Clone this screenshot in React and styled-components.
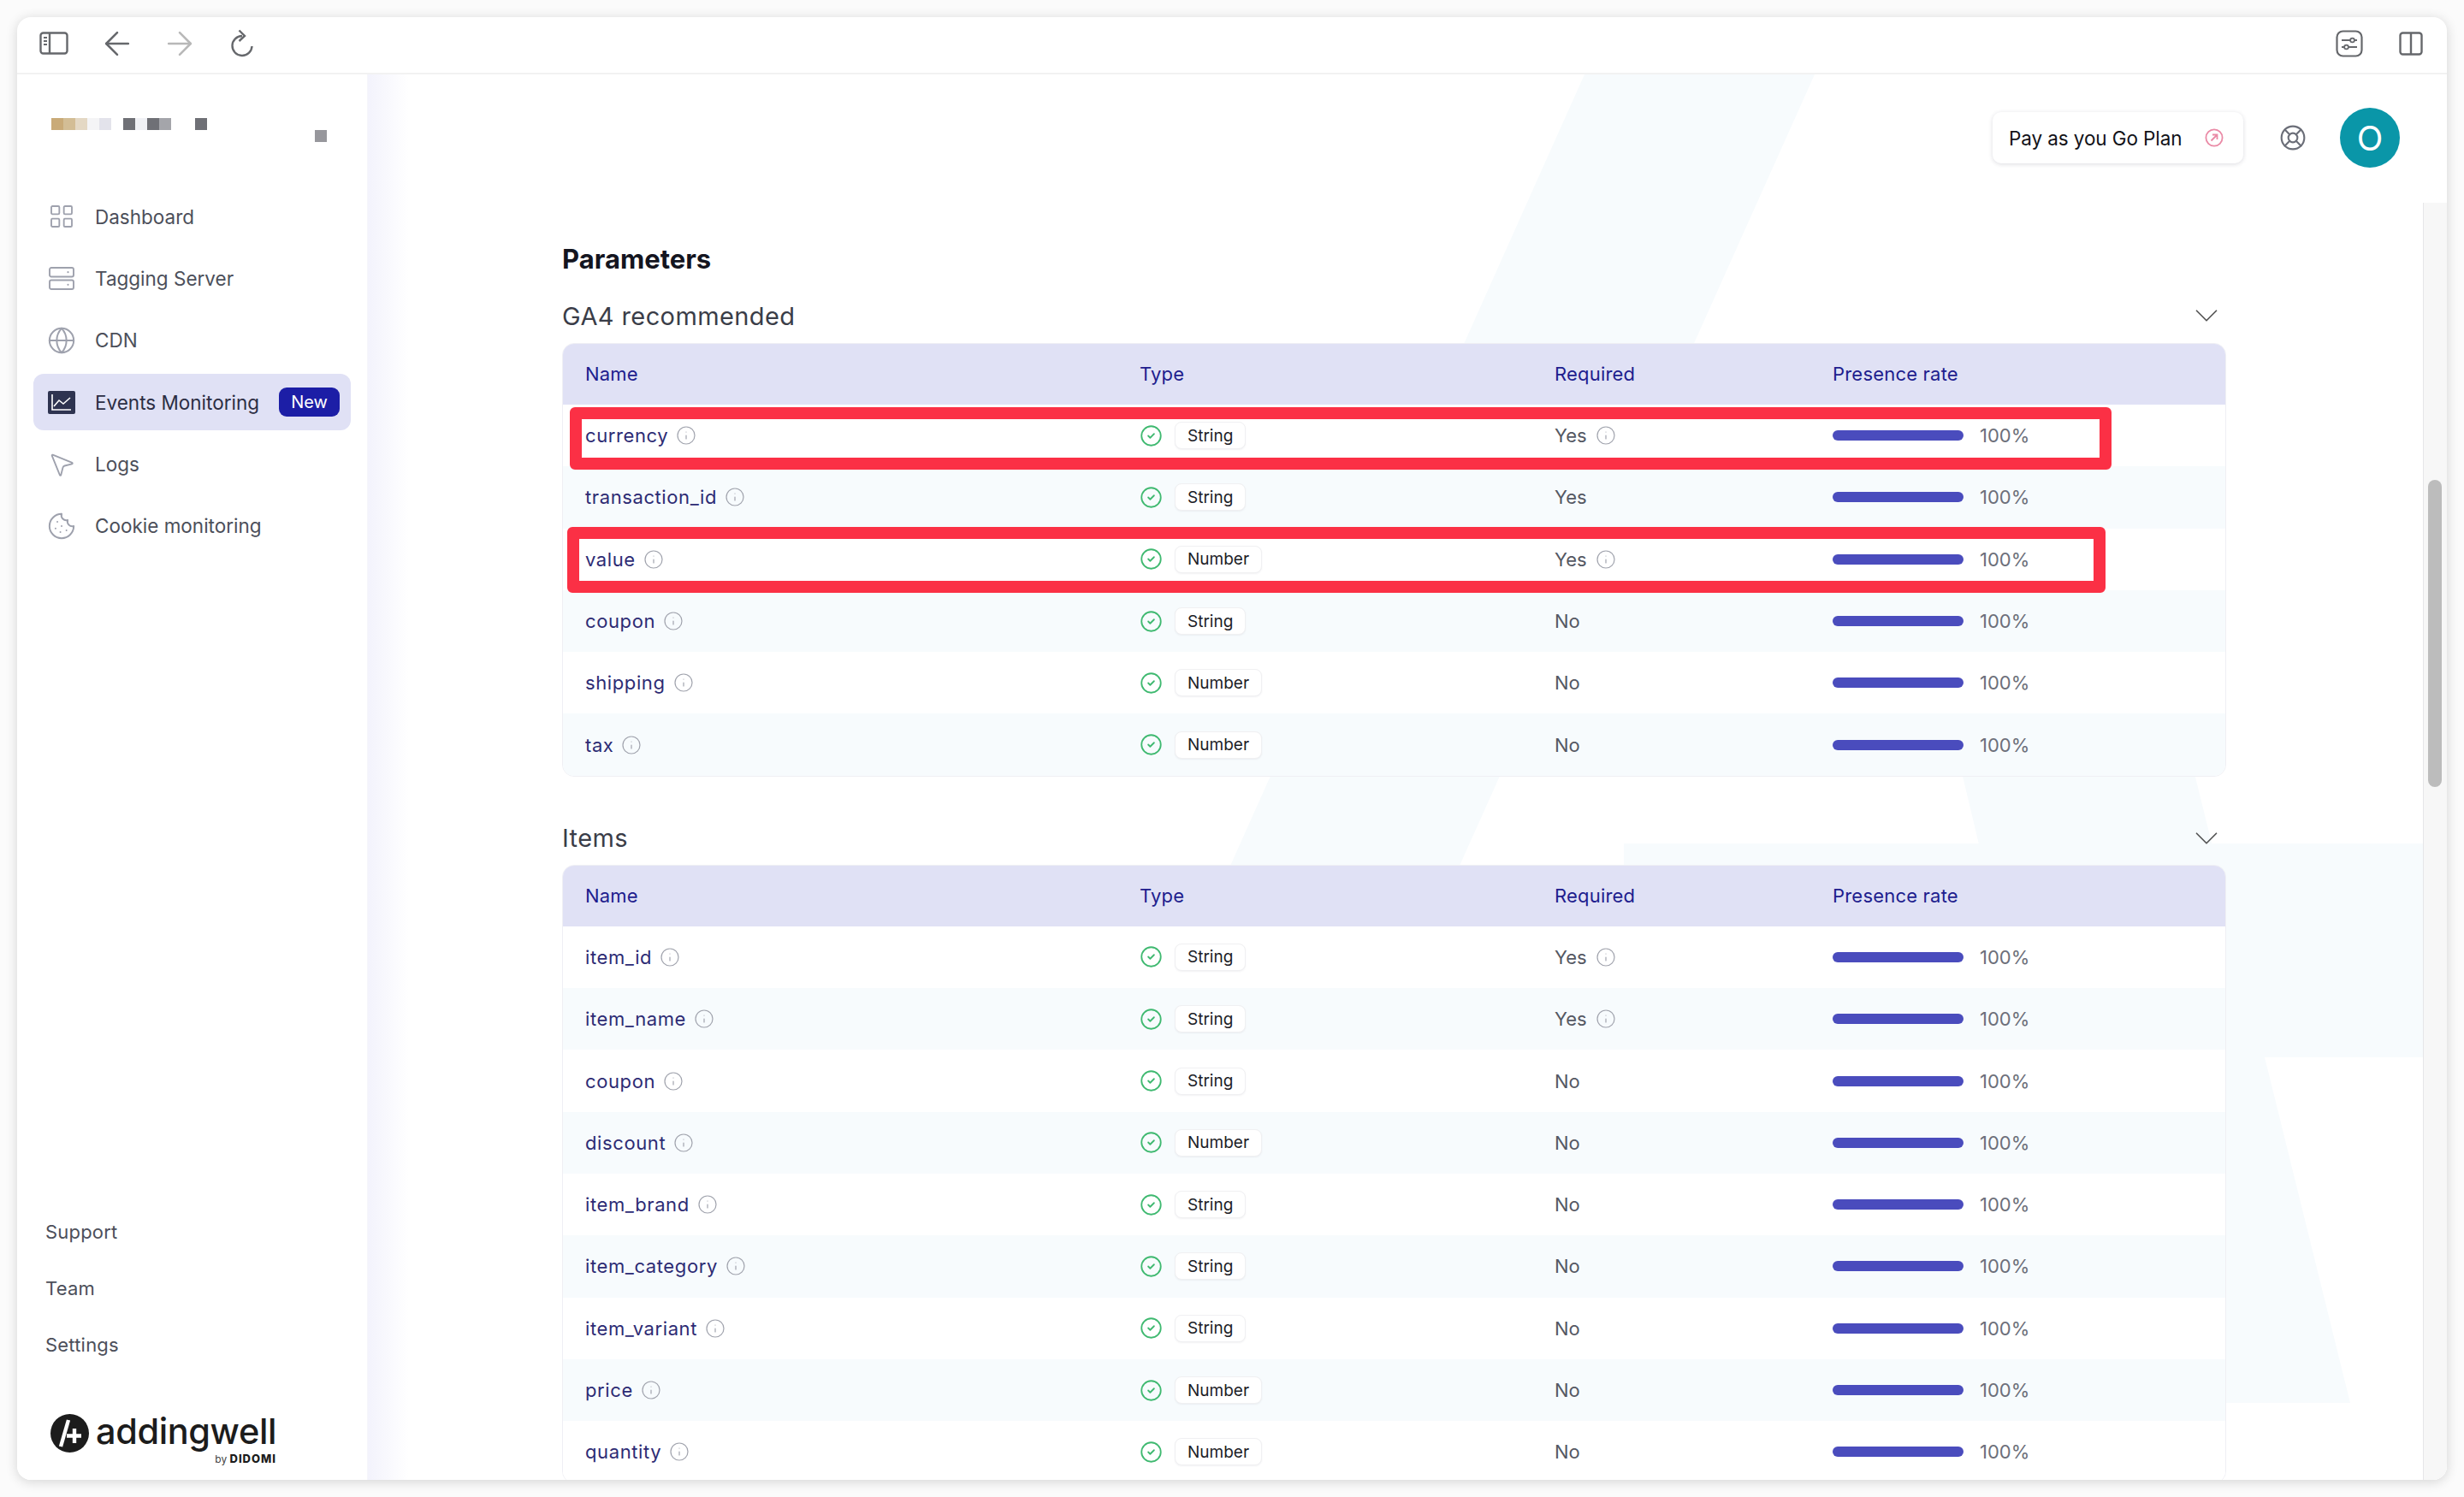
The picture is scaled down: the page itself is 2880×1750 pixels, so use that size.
import React from 'react';
import styled, { createGlobalStyle } from 'styled-components';
import {
  ArrowLeft,
  ArrowRight,
  LayoutGrid,
  Globe,
  MousePointer2,
  Cookie,
  LifeBuoy,
  ChevronDown,
  Info,
  CircleCheck,
} from 'lucide-react';

const GlobalStyle = createGlobalStyle`
  * { box-sizing: border-box; }
  html, body { margin: 0; padding: 0; background: #fbfbfb; }
  body { font-family: Inter, "Noto Sans", sans-serif; }
`;

const Page = styled.div`
  width: 2880px;
  height: 1750px;
  padding: 20px;
  overflow: hidden;
`;

const Window = styled.div`
  width: 2840px;
  height: 1710px;
  display: flex;
  flex-direction: column;
  background: #fff;
  border-radius: 16px;
  overflow: hidden;
  box-shadow: 0 2px 14px rgba(0, 0, 0, 0.16);
`;

const Toolbar = styled.div`
  height: 67px;
  flex: none;
  display: flex;
  align-items: center;
  padding: 0 28px 4px 26px;
  border-bottom: 2px solid #f2f2f2;
  color: #66686c;
`;

const ToolGroup = styled.div`
  display: flex;
  align-items: center;
  gap: ${(p) => p.$gap}px;
  margin-left: ${(p) => p.$left || 0}px;
`;

const ReloadSvg = styled.svg`
  margin-left: 6px;
`;

const Spacer = styled.div`
  flex: 1;
`;

const Body = styled.div`
  flex: 1;
  min-height: 0;
  display: flex;
`;

const Sidebar = styled.aside`
  width: 410px;
  flex: none;
  display: flex;
  flex-direction: column;
  padding: 51px 0 16px 19px;
  background: #fff;
  border-right: 1px solid #f6f6fb;
`;

const Brand = styled.div`
  height: 82px;
  padding-left: 21px;
`;

const PixelRow = styled.div`
  display: flex;
  margin-left: ${(p) => p.$offset || 0}px;
`;

const Pixel = styled.span`
  width: 14px;
  height: 14px;
  background: ${(p) => p.$color || 'transparent'};
`;

const Nav = styled.nav`
  display: flex;
  flex-direction: column;
  gap: 6.4px;
`;

const NavItem = styled.div`
  width: 371px;
  height: 66px;
  display: flex;
  align-items: center;
  gap: 22px;
  padding: 0 13px 0 16px;
  border-radius: 12px;
  background: ${(p) => (p.$active ? '#e0e1f5' : 'transparent')};
  color: ${(p) => (p.$active ? '#2c2e44' : '#4c4f5a')};
  font-size: 22.5px;
  white-space: nowrap;
`;

const NavIcon = styled.span`
  width: 34px;
  flex: none;
  display: flex;
  justify-content: center;
  color: #9ea1ad;
`;

const NewBadge = styled.span`
  margin-left: auto;
  flex: none;
  width: 71px;
  height: 34px;
  display: flex;
  align-items: center;
  justify-content: center;
  border-radius: 9px;
  background: #1c1ea6;
  color: #fff;
  font-size: 20px;
`;

const BottomNav = styled.div`
  margin-top: auto;
  padding-left: 14px;
  display: flex;
  flex-direction: column;
`;

const BottomLink = styled.div`
  height: 66px;
  display: flex;
  align-items: center;
  color: #4c4f5a;
  font-size: 22px;
  letter-spacing: 0.2px;
`;

const LogoRow = styled.div`
  margin: 46px 0 0 20px;
  display: flex;
  gap: 8px;
`;

const LogoMark = styled.svg`
  width: 45px;
  height: 45px;
  margin-top: 2px;
  flex: none;
`;

const LogoText = styled.div`
  display: flex;
  flex-direction: column;
  align-items: flex-end;
`;

const Wordmark = styled.div`
  height: 46px;
  line-height: 44px;
  font-size: 41.5px;
  font-weight: 500;
  letter-spacing: -0.4px;
  color: #1c1c1c;
`;

const ByLine = styled.div`
  font-size: 12px;
  line-height: 16px;
  color: #444;
  b {
    font-weight: 800;
    font-size: 13px;
    letter-spacing: 1px;
    color: #1c1c1c;
  }
`;

const Main = styled.main`
  position: relative;
  flex: 1;
  min-width: 0;
  overflow: hidden;
  background: linear-gradient(90deg, #f3f3fc 0, #fff 48px);
`;

const Watermark = styled.svg`
  position: absolute;
  left: 0;
  top: 0;
  width: 2430px;
  height: 1643px;
`;

const Inner = styled.div`
  position: relative;
`;

const TopBar = styled.div`
  display: flex;
  justify-content: flex-end;
  align-items: center;
  gap: 42px;
  padding: 39px 55px 0 0;
`;

const PlanButton = styled.div`
  width: 293px;
  height: 60px;
  display: flex;
  align-items: center;
  justify-content: space-between;
  padding: 0 23px 0 19px;
  border-radius: 10px;
  background: #fff;
  box-shadow: 0 1px 5px rgba(30, 30, 60, 0.16);
  color: #121218;
  font-size: 22.5px;
  letter-spacing: -0.1px;
`;

const SupportIcon = styled(LifeBuoy)`
  color: #6b6e78;
  margin-right: -3px;
`;

const Avatar = styled.div`
  width: 70px;
  height: 70px;
  border-radius: 50%;
  background: #0a96a8;
  color: #fff;
  font-size: 40px;
  display: flex;
  align-items: center;
  justify-content: center;
`;

const Content = styled.div`
  width: 1945px;
  margin-left: 227px;
`;

const Heading = styled.h2`
  margin: 87px 0 28px;
  height: 40px;
  line-height: 40px;
  font-size: 31px;
  font-weight: 700;
  color: #14151f;
`;

const SectionHead = styled.div`
  height: 36px;
  margin: ${(p) => p.$top || 0}px 0 ${(p) => p.$bottom}px;
  display: flex;
  align-items: center;
  justify-content: space-between;
  color: #3a3d48;
  font-size: 29px;
  letter-spacing: 0.4px;
`;

const Chevron = styled(ChevronDown)`
  color: #555;
`;

const TableWrap = styled.div`
  position: relative;
`;

const Table = styled.div`
  border: 1px solid #efeff4;
  border-radius: 14px;
  overflow: hidden;
  background: #fff;
`;

const columns = '648px 485px 325px 1fr';

const HeaderRow = styled.div`
  height: 72px;
  margin: -1px -1px 0;
  padding-left: 27px;
  display: grid;
  grid-template-columns: ${columns};
  align-items: center;
  background: #e0e1f5;
  color: #201d8e;
  font-size: 22px;
  letter-spacing: 0.2px;
`;

const Row = styled.div`
  height: 72.3px;
  margin: 0 -1px;
  padding-left: 27px;
  display: grid;
  grid-template-columns: ${columns};
  align-items: center;
  background: ${(p) => (p.$odd ? '#f7fbfd' : '#fff')};
  font-size: 22px;
`;

const NameCell = styled.div`
  display: flex;
  align-items: center;
  gap: 9px;
  color: #2d2b74;
  letter-spacing: 0.6px;
`;

const InfoIcon = styled(Info)`
  color: #a0a3ad;
  flex: none;
`;

const TypeCell = styled.div`
  display: flex;
  align-items: center;
  gap: 14px;
  color: #3fb970;
`;

const TypeTag = styled.span`
  height: 32px;
  padding: 0 14px;
  display: flex;
  align-items: center;
  border-radius: 8px;
  background: #fff;
  border: 1px solid #f0f0f2;
  box-shadow: 0 1px 2px rgba(30, 30, 60, 0.06);
  color: #1c1d26;
  font-size: 19px;
`;

const RequiredCell = styled.div`
  display: flex;
  align-items: center;
  gap: 10px;
  color: #555863;
`;

const RateCell = styled.div`
  display: flex;
  align-items: center;
  gap: 19px;
  color: #6c6f7a;
`;

const RateBar = styled.div`
  width: 153px;
  height: 12px;
  border-radius: 6px;
  background: #4a4cbd;
`;

const Highlight = styled.div`
  position: absolute;
  left: ${(p) => p.$left}px;
  top: ${(p) => p.$top}px;
  width: ${(p) => p.$width}px;
  height: ${(p) => p.$height}px;
  border: 14px solid #fb3045;
  border-radius: 6px;
`;

const ScrollTrack = styled.div`
  position: absolute;
  right: 0;
  top: 150px;
  bottom: 0;
  width: 28px;
  padding: 324px 0 0 5px;
  background: #f7f7f7;
  border-left: 1px solid #e6e6e8;
`;

const ScrollThumb = styled.div`
  width: 16px;
  height: 359px;
  border-radius: 8px;
  background: #bcbcbc;
`;

const params = [
  { name: 'currency', type: 'String', required: 'Yes', hint: true },
  { name: 'transaction_id', type: 'String', required: 'Yes' },
  { name: 'value', type: 'Number', required: 'Yes', hint: true },
  { name: 'coupon', type: 'String', required: 'No' },
  { name: 'shipping', type: 'Number', required: 'No' },
  { name: 'tax', type: 'Number', required: 'No' },
];

const items = [
  { name: 'item_id', type: 'String', required: 'Yes', hint: true },
  { name: 'item_name', type: 'String', required: 'Yes', hint: true },
  { name: 'coupon', type: 'String', required: 'No' },
  { name: 'discount', type: 'Number', required: 'No' },
  { name: 'item_brand', type: 'String', required: 'No' },
  { name: 'item_category', type: 'String', required: 'No' },
  { name: 'item_variant', type: 'String', required: 'No' },
  { name: 'price', type: 'Number', required: 'No' },
  { name: 'quantity', type: 'Number', required: 'No' },
];

const topPixels = ['#c9aa78', '#d3bd95', '#e4d8c4', '#f4f4f6', '#e3e3eb', null, '#6f7076', '#f0f1f5', '#6f7076', '#a4a5aa', null, null, '#6f7076'];

function SidebarToggleIcon() {
  return (
    <svg width="34" height="27" viewBox="0 0 34 27" fill="none" stroke="currentColor" strokeWidth="2.4">
      <rect x="1.5" y="1.5" width="31" height="24" rx="3" />
      <path d="M12 2v23" />
      <path d="M5 7h4M5 11h4M5 15h4" strokeWidth="1.8" />
    </svg>
  );
}

function ReloadIcon() {
  return (
    <ReloadSvg width="32" height="34" viewBox="0 0 32 34" fill="none" stroke="currentColor" strokeWidth="2.4">
      <path d="M16 8A11.5 11.5 0 1 0 27.5 20" />
      <path d="M12.5 1.5L19 8l-6.5 6" />
    </ReloadSvg>
  );
}

function SlidersBoxIcon() {
  return (
    <svg width="32" height="32" viewBox="0 0 32 32" fill="none" stroke="currentColor" strokeWidth="2.2">
      <rect x="1.5" y="1.5" width="29" height="29" rx="7" />
      <path d="M7 12h10M22 12h3M7 20h3M15 20h10" strokeWidth="1.8" />
      <circle cx="19.5" cy="12" r="2.4" strokeWidth="1.8" />
      <circle cx="12.5" cy="20" r="2.4" strokeWidth="1.8" />
    </svg>
  );
}

function SplitIcon() {
  return (
    <svg width="28" height="28" viewBox="0 0 28 28" fill="none" stroke="currentColor" strokeWidth="2.4">
      <rect x="1.5" y="1.5" width="25" height="25" rx="3" />
      <path d="M14 2v24" />
    </svg>
  );
}

function ServerIcon() {
  return (
    <svg width="30" height="27" viewBox="0 0 30 27" fill="none" stroke="currentColor" strokeWidth="1.9">
      <rect x="1" y="1" width="28" height="10.5" rx="2" />
      <rect x="1" y="15.5" width="28" height="10.5" rx="2" />
      <circle cx="22.5" cy="6.2" r="1.1" fill="currentColor" stroke="none" />
      <circle cx="22.5" cy="20.8" r="1.1" fill="currentColor" stroke="none" />
    </svg>
  );
}

function ChartIcon() {
  return (
    <svg width="32" height="27" viewBox="0 0 32 27">
      <rect width="32" height="27" rx="2" fill="#2e3350" />
      <path d="M5 4v18h22" fill="none" stroke="#fff" strokeWidth="1.6" />
      <path d="M7 18l6-7 5 4 8-7" fill="none" stroke="#fff" strokeWidth="1.6" />
    </svg>
  );
}

function PlanArrowIcon() {
  return (
    <svg width="22" height="22" viewBox="0 0 22 22" fill="none" stroke="#ea8aa6" strokeWidth="1.8">
      <circle cx="11" cy="11" r="9.6" />
      <path d="M7.5 14.5l7-7M9 7.5h5.5V13" />
    </svg>
  );
}

function DataRow({ row, odd }) {
  return (
    <Row $odd={odd}>
      <NameCell>
        {row.name}
        <InfoIcon size={24} strokeWidth={1.2} />
      </NameCell>
      <TypeCell>
        <CircleCheck size={27} strokeWidth={1.6} />
        <TypeTag>{row.type}</TypeTag>
      </TypeCell>
      <RequiredCell>
        {row.required}
        {row.hint && <InfoIcon size={24} strokeWidth={1.2} />}
      </RequiredCell>
      <RateCell>
        <RateBar />
        100%
      </RateCell>
    </Row>
  );
}

function ParamTable({ rows }) {
  return (
    <Table>
      <HeaderRow>
        <div>Name</div>
        <div>Type</div>
        <div>Required</div>
        <div>Presence rate</div>
      </HeaderRow>
      {rows.map((row, i) => (
        <DataRow key={row.name} row={row} odd={i % 2 === 1} />
      ))}
    </Table>
  );
}

export default function App() {
  return (
    <Page>
      <GlobalStyle />
      <Window>
        <Toolbar>
          <SidebarToggleIcon />
          <ToolGroup $gap={29} $left={35}>
            <ArrowLeft size={44} strokeWidth={1.4} />
            <ArrowRight size={44} strokeWidth={1.4} color="#b8b8b8" />
            <ReloadIcon />
          </ToolGroup>
          <Spacer />
          <ToolGroup $gap={42}>
            <SlidersBoxIcon />
            <SplitIcon />
          </ToolGroup>
        </Toolbar>
        <Body>
          <Sidebar>
            <Brand>
              <PixelRow>
                {topPixels.map((c, i) => (
                  <Pixel key={i} $color={c} />
                ))}
              </PixelRow>
              <PixelRow $offset={308}>
                <Pixel $color="#97979c" />
              </PixelRow>
            </Brand>
            <Nav>
              <NavItem>
                <NavIcon><LayoutGrid size={32} strokeWidth={1.4} /></NavIcon>
                Dashboard
              </NavItem>
              <NavItem>
                <NavIcon><ServerIcon /></NavIcon>
                Tagging Server
              </NavItem>
              <NavItem>
                <NavIcon><Globe size={34} strokeWidth={1.4} /></NavIcon>
                CDN
              </NavItem>
              <NavItem $active>
                <NavIcon><ChartIcon /></NavIcon>
                Events Monitoring
                <NewBadge>New</NewBadge>
              </NavItem>
              <NavItem>
                <NavIcon><MousePointer2 size={36} strokeWidth={1.3} /></NavIcon>
                Logs
              </NavItem>
              <NavItem>
                <NavIcon><Cookie size={34} strokeWidth={1.4} /></NavIcon>
                Cookie monitoring
              </NavItem>
            </Nav>
            <BottomNav>
              <BottomLink>Support</BottomLink>
              <BottomLink>Team</BottomLink>
              <BottomLink>Settings</BottomLink>
            </BottomNav>
            <LogoRow>
              <LogoMark viewBox="0 0 45 45">
                <circle cx="22.5" cy="22.5" r="22.5" fill="#1c1c1c" />
                <path d="M21 7L12 38" stroke="#fff" strokeWidth="4.4" fill="none" />
                <path d="M28 17v17M19 25.5h17" stroke="#fff" strokeWidth="4.4" fill="none" />
              </LogoMark>
              <LogoText>
                <Wordmark>addingwell</Wordmark>
                <ByLine>by <b>DIDOMI</b></ByLine>
              </LogoText>
            </LogoRow>
          </Sidebar>
          <Main>
            <Watermark viewBox="430 87 2430 1643">
              <g fill="#f7fbfd">
                <polygon points="1852,87 2121,87 1706,1012 1438,1012" />
                <polygon points="2192,480 2460,480 2747,1640 2560,1640 2313,987" />
                <rect x="1898" y="986" width="934" height="250" />
              </g>
            </Watermark>
            <Inner>
              <TopBar>
                <PlanButton>
                  Pay as you Go Plan
                  <PlanArrowIcon />
                </PlanButton>
                <SupportIcon size={32} strokeWidth={1.6} />
                <Avatar>O</Avatar>
              </TopBar>
              <Content>
                <Heading>Parameters</Heading>
                <SectionHead $bottom={14}>
                  GA4 recommended
                  <Chevron size={46} strokeWidth={0.9} />
                </SectionHead>
                <TableWrap>
                  <ParamTable rows={params} />
                  <Highlight $left={9} $top={75} $width={1802} $height={73} />
                  <Highlight $left={6} $top={215} $width={1798} $height={77} />
                </TableWrap>
                <SectionHead $top={54} $bottom={13}>
                  Items
                  <Chevron size={46} strokeWidth={0.9} />
                </SectionHead>
                <ParamTable rows={items} />
              </Content>
            </Inner>
            <ScrollTrack>
              <ScrollThumb />
            </ScrollTrack>
          </Main>
        </Body>
      </Window>
    </Page>
  );
}
